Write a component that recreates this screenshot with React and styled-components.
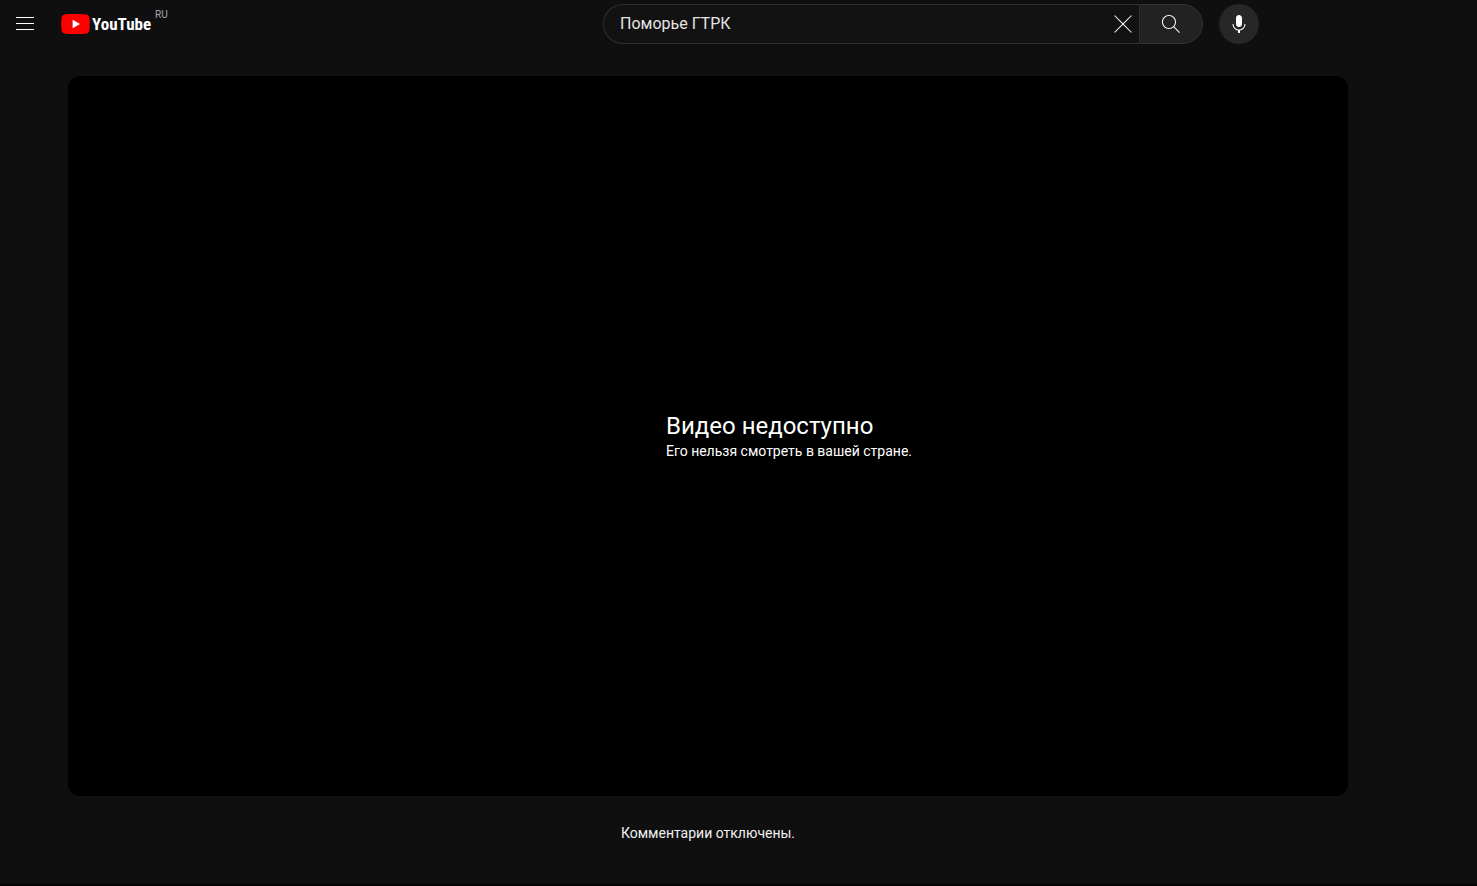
import React, { useState } from "react";
import styled, { createGlobalStyle } from "styled-components";

const GlobalStyle = createGlobalStyle`
  *, *::before, *::after { box-sizing: border-box; }
  body {
    margin: 0;
    background: #0f0f0f;
    color: #f1f1f1;
    font-family: Roboto, "Liberation Sans", sans-serif;
  }
`;

const Page = styled.div`
  min-height: 100vh;
  border-bottom: 2px solid #060304;
`;

const Header = styled.header`
  display: flex;
  align-items: center;
  justify-content: space-between;
  gap: 24px;
  height: 48px;
  padding: 0 218px 0 5px;
`;

const HeaderStart = styled.div`
  display: flex;
  align-items: center;
  gap: 16px;
`;

const IconButton = styled.button`
  display: flex;
  align-items: center;
  justify-content: center;
  flex: none;
  width: 40px;
  height: 40px;
  padding: 0;
  border: 0;
  border-radius: 50%;
  background: ${(p) => (p.$filled ? "#272727" : "transparent")};
  color: #fff;
  cursor: pointer;
`;

const Icon = styled.svg`
  display: block;
  width: 24px;
  height: 24px;
  fill: currentColor;
`;

const LogoLink = styled.a`
  display: flex;
  align-items: center;
  height: 40px;
  color: #fff;
  text-decoration: none;
`;

const LogoMark = styled.svg`
  display: block;
  width: 29px;
  height: 20px;
`;

const Wordmark = styled.span`
  margin-left: 2px;
  font-family: "Roboto Condensed", "Liberation Sans Narrow", sans-serif;
  font-size: 17px;
  font-weight: 700;
  line-height: 24px;
`;

const Region = styled.span`
  align-self: flex-start;
  margin: 5px 0 0 4px;
  color: #aaa;
  font-size: 10px;
  line-height: 12px;
`;

const SearchArea = styled.div`
  display: flex;
  flex: 0 1 656px;
  gap: 16px;
  min-width: 0;
`;

const SearchForm = styled.form`
  display: flex;
  flex: 1;
  min-width: 0;
  height: 40px;
`;

const SearchField = styled.div`
  display: flex;
  align-items: center;
  flex: 1;
  min-width: 0;
  padding-left: 16px;
  border: 1px solid #303030;
  border-right: 0;
  border-radius: 40px 0 0 40px;
  background: #121212;
`;

const SearchInput = styled.input`
  flex: 1;
  min-width: 0;
  padding: 0;
  border: 0;
  outline: 0;
  background: transparent;
  color: #e4e4e4;
  font: 400 16px/24px Roboto, "Liberation Sans", sans-serif;
`;

const ClearButton = styled(IconButton)`
  width: 32px;
`;

const SearchButton = styled(IconButton)`
  width: 64px;
  border: 1px solid #303030;
  border-radius: 0 40px 40px 0;
  background: #222;
`;

const Main = styled.main`
  padding: 28px 129px 32px 68px;
`;

const Player = styled.section`
  display: flex;
  align-items: center;
  justify-content: center;
  aspect-ratio: 16 / 9;
  padding-left: 162px;
  border-radius: 12px;
  background: #000;
  color: #fff;
`;

const Title = styled.h1`
  margin: 0;
  font-size: 24px;
  font-weight: 400;
  line-height: 30px;
`;

const Reason = styled.p`
  margin: 0;
  font-size: 14px;
  line-height: 20px;
`;

const CommentsNote = styled.p`
  margin: 27px 0 0;
  font-size: 14px;
  line-height: 20px;
  text-align: center;
`;

const paths = {
  menu: "M21 6H3V5h18v1zm0 5H3v1h18v-1zm0 6H3v1h18v-1z",
  clear:
    "m12.71 12 8.15 8.15-.71.71L12 12.71l-8.15 8.15-.71-.71L11.29 12 3.15 3.85l.71-.71L12 11.29l8.15-8.15.71.71L12.71 12z",
  search:
    "M20.87 20.17l-5.59-5.59C16.35 13.35 17 11.75 17 10c0-3.87-3.13-7-7-7s-7 3.13-7 7 3.13 7 7 7c1.75 0 3.35-.65 4.58-1.71l5.59 5.59.7-.71zM10 16c-3.31 0-6-2.69-6-6s2.69-6 6-6 6 2.69 6 6-2.69 6-6 6z",
  mic: "M12 3c-1.66 0-3 1.37-3 3.07v5.86c0 1.7 1.34 3.07 3 3.07s3-1.37 3-3.07V6.07C15 4.37 13.66 3 12 3zm6.5 9h-1c0 3.03-2.47 5.5-5.5 5.5S6.5 15.03 6.5 12h-1c0 3.24 2.39 5.93 5.5 6.41V21h2v-2.59c3.11-.48 5.5-3.17 5.5-6.41z",
};

function Glyph({ name }) {
  return (
    <Icon viewBox="0 0 24 24" aria-hidden="true">
      <path d={paths[name]} />
    </Icon>
  );
}

export default function App() {
  const [query, setQuery] = useState("Поморье ГТРК");
  return (
    <Page>
      <GlobalStyle />
      <Header>
        <HeaderStart>
          <IconButton type="button" aria-label="Меню">
            <Glyph name="menu" />
          </IconButton>
          <LogoLink href="#">
            <LogoMark viewBox="0 0 28.57 20" aria-hidden="true">
              <path
                fill="#f00"
                d="M27.97 3.12C27.64 1.89 26.68.93 25.45.6 23.22 0 14.285 0 14.285 0S5.35 0 3.12.6C1.89.93.93 1.89.6 3.12 0 5.35 0 10 0 10s0 4.65.6 6.88c.33 1.23 1.29 2.19 2.52 2.52C5.35 20 14.285 20 14.285 20s8.935 0 11.165-.6c1.23-.33 2.19-1.29 2.52-2.52.6-2.23.6-6.88.6-6.88s0-4.65-.6-6.88z"
              />
              <path fill="#fff" d="M11.43 14.29 18.85 10l-7.42-4.28z" />
            </LogoMark>
            <Wordmark>YouTube</Wordmark>
            <Region>RU</Region>
          </LogoLink>
        </HeaderStart>
        <SearchArea>
          <SearchForm role="search" onSubmit={(e) => e.preventDefault()}>
            <SearchField>
              <SearchInput
                aria-label="Поиск"
                value={query}
                onChange={(e) => setQuery(e.target.value)}
              />
              <ClearButton
                type="button"
                aria-label="Очистить"
                onClick={() => setQuery("")}
              >
                <Glyph name="clear" />
              </ClearButton>
            </SearchField>
            <SearchButton type="submit" aria-label="Найти">
              <Glyph name="search" />
            </SearchButton>
          </SearchForm>
          <IconButton type="button" $filled aria-label="Голосовой поиск">
            <Glyph name="mic" />
          </IconButton>
        </SearchArea>
      </Header>
      <Main>
        <Player>
          <div>
            <Title>Видео недоступно</Title>
            <Reason>Его нельзя смотреть в вашей стране.</Reason>
          </div>
        </Player>
        <CommentsNote>Комментарии отключены.</CommentsNote>
      </Main>
    </Page>
  );
}
